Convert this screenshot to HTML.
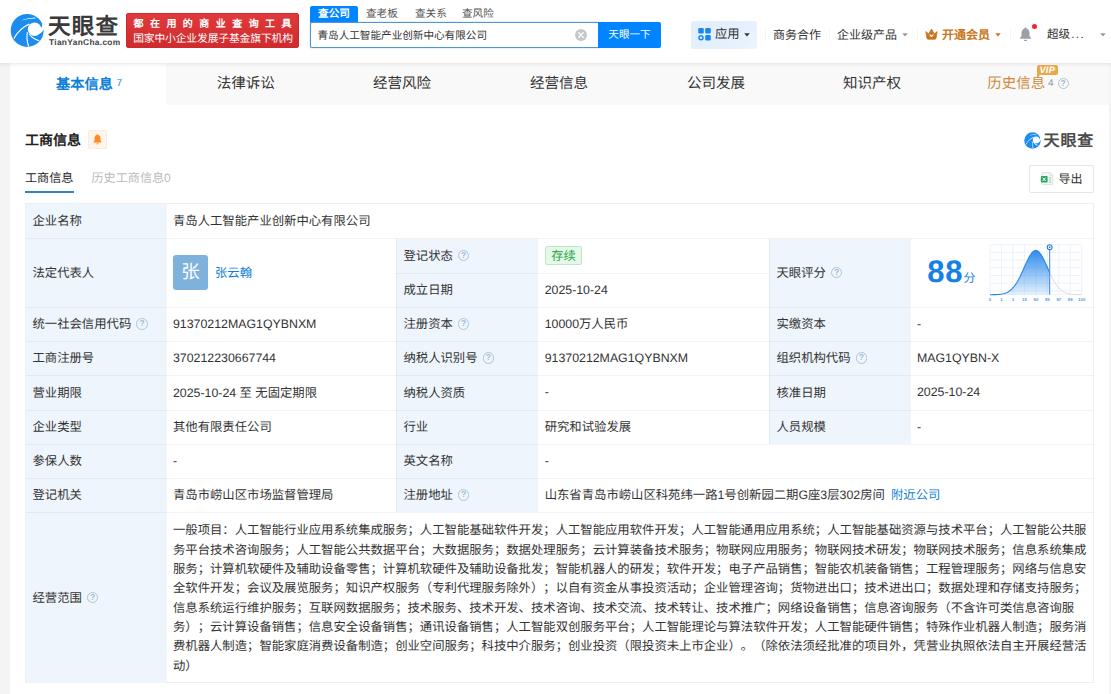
<!DOCTYPE html>
<html lang="zh-CN">
<head>
<meta charset="utf-8">
<title>天眼查</title>
<style>
*{box-sizing:border-box;margin:0;padding:0}
html,body{width:1111px;height:694px;overflow:hidden}
body{position:relative;background:#f4f4f4;font-family:"Liberation Sans",sans-serif;font-size:12px;color:#333;line-height:1;text-rendering:geometricPrecision}
.abs{position:absolute;white-space:nowrap}
/* header */
#hdr{position:absolute;left:0;top:0;width:1111px;height:63px;background:#fff}
#hsh{position:absolute;left:0;top:63px;width:1111px;height:4px;background:linear-gradient(rgba(0,0,20,.07),rgba(0,0,20,0));z-index:5}
#banner{position:absolute;left:126px;top:13px;width:173px;height:35px;background:linear-gradient(#e03a3c,#cf2a2d);border:1px solid #cc2c2e;border-radius:2px;color:#fff}
#banner .l1{position:absolute;left:-1px;top:6px;width:173px;text-align:center;font-size:10px;font-weight:bold;letter-spacing:6.450px;padding-left:6.500px}
#banner .l2{position:absolute;left:-.5px;top:19.500px;width:173px;text-align:center;font-size:10.800px;font-weight:500;letter-spacing:-.15px}
.stab{position:absolute;top:6.700px;height:16px;line-height:15px;font-size:10.6px;color:#555}
#stab1{top:6px;height:17px;line-height:16.400px;left:310px;width:48px;background:#0084ff;color:#fff;font-weight:bold;text-align:center;border-radius:2px 2px 0 0}
#sinput{position:absolute;left:310px;top:22px;width:289px;height:26px;border:1px solid #4f97d3;box-shadow:0 0 2px rgba(80,160,230,.5);border-right:0;background:#fff;border-radius:2px 0 0 2px}
#sinput span{position:absolute;left:6.500px;top:8px;font-size:10.6px;line-height:11px;color:#333}
#sbtn{position:absolute;left:598px;top:22px;width:63px;height:26px;background:#0084ff;color:#fff;font-size:10.6px;font-weight:500;text-align:center;line-height:26.500px;border-radius:0 2px 2px 0}
#app{position:absolute;left:691px;top:21px;width:66px;height:28px;background:linear-gradient(135deg,#e1eefc 0%,#e4f0fc 60%,#eef5fd 100%);border-radius:2px}
.nav{position:absolute;top:29px;font-size:12px;line-height:12px;color:#333}
.caret{position:absolute;width:6px;height:4px;background:#999;clip-path:polygon(4% 5%,96% 5%,50% 88%)}
.vsep{position:absolute;top:29px;width:1px;height:11px;background:#f5f5f5}
/* tabs */
#tabs{position:absolute;left:10px;top:63px;width:1099px;height:42px;background:#f9f9f9}
#tabs .on{position:absolute;left:0;top:0;width:156px;height:42px;background:#fff}
.tab{position:absolute;top:77.300px;font-size:14.5px;line-height:15px;color:#333;transform:translateX(-50%)}
/* content */
#main{position:absolute;left:10px;top:105px;width:1099px;height:589px;background:#fff}
/* table */
#tbl{position:absolute;left:25px;top:203px;width:1069px;height:480px;border:1px solid #eeeff0;background:#fff}
.lb{position:absolute;background:#eef5fc}
.hl{position:absolute;height:1px;background:rgba(20,40,60,.055)}
.vl{position:absolute;width:1px;background:rgba(20,40,60,.05)}
.t{position:absolute;white-space:nowrap;font-size:12.35px;line-height:14px;color:#333;text-spacing-trim:space-all}
.q{display:inline-block;width:11.500px;height:11.500px;border:1px solid #afc5d9;border-radius:50%;color:#a3bbd1;font-size:8.500px;line-height:9.500px;text-align:center;vertical-align:2px;margin-left:5px;font-weight:bold}
.blue{color:#0e7fdb}
</style>
</head>
<body>
<div id="hdr">
<svg class="abs" style="left:6px;top:10px" width="44" height="42" viewBox="0 0 727 694">
<circle cx="350" cy="338" r="272" fill="#1b8cf0"/>
<circle cx="472" cy="318" r="112" fill="#fff"/>
<path d="M583 293C600 270 603 250 598 228L660 228L660 322L622 322C612 350 590 375 560 388L472 318Z" fill="#fff"/>
<path d="M122 468Q215 295 380 222L395 240Q230 310 136 478Z" fill="#fff"/>
<path d="M365 606Q322 480 345 360L362 372Q342 480 385 602Z" fill="#fff"/>
<path d="M372 392Q420 480 545 515L552 500Q440 465 392 398Z" fill="#fff"/>
<path d="M265 165Q380 120 492 122L480 140Q380 135 275 170Z" fill="#fff"/>
</svg>
<div class="abs" style="left:48px;top:15.300px;font-size:22.5px;font-weight:bold;color:#3a3a3a;letter-spacing:1.2px;line-height:24px">天眼查</div>
<div class="abs" style="left:49px;top:38px;font-size:8.4px;font-weight:bold;color:#444;letter-spacing:.3px;line-height:8px">TianYanCha.com</div>
<div id="banner"><div class="l1">都在用的商业查询工具</div><div class="l2">国家中小企业发展子基金旗下机构</div></div>
<div class="stab" id="stab1">查公司</div>
<div class="stab" style="left:366px">查老板</div>
<div class="stab" style="left:415px">查关系</div>
<div class="stab" style="left:462px">查风险</div>
<div id="sinput"><span>青岛人工智能产业创新中心有限公司</span></div>
<svg class="abs" style="left:575px;top:28.500px" width="12" height="12" viewBox="0 0 12 12"><circle cx="6" cy="6" r="6" fill="#c4c7cc"/><path d="M3.800 3.800l4.400 4.400M8.200 3.800l-4.400 4.400" stroke="#fff" stroke-width="1.300" stroke-linecap="round"/></svg>
<div id="sbtn">天眼一下</div>
<div id="app"></div>
<svg class="abs" style="left:698px;top:28.400px" width="13.500" height="13" viewBox="0 0 13 13"><rect x="0" y="0" width="5.500" height="5.500" rx="1.200" fill="#1a85f0"/><rect x="7" y="0" width="5.500" height="5.500" rx="1.200" fill="#1a85f0"/><rect x="7" y="7" width="5.500" height="5.500" rx="1.200" fill="#1a85f0"/><circle cx="2.750" cy="9.750" r="2" fill="none" stroke="#1a85f0" stroke-width="1.500"/></svg>
<div class="nav" style="left:715px;top:28px;font-size:12.3px">应用</div>
<div class="caret" style="left:744px;top:33px;background:#333"></div>
<div class="vsep" style="left:765px"></div>
<div class="nav" style="left:773px">商务合作</div>
<div class="vsep" style="left:829px"></div>
<div class="nav" style="left:837px">企业级产品</div>
<div class="caret" style="left:902px;top:33px"></div>
<div class="vsep" style="left:917px"></div>
<svg class="abs" style="left:925px;top:27.500px" width="13" height="12" viewBox="0 0 13 12"><path d="M0.800 3.600L3.700 5.900L6.500 1L9.300 5.900L12.200 3.600L11 10.200Q10.900 11.200 9.900 11.200H3.100Q2.100 11.200 2 10.200Z" fill="#cb7420" stroke="#cb7420" stroke-width=".8" stroke-linejoin="round"/><path d="M4.900 6.800L6.500 8.500L8.100 6.800" fill="none" stroke="#fff" stroke-width="1.100" stroke-linecap="round" stroke-linejoin="round"/></svg>
<div class="nav" style="left:942px;color:#cb7420;font-weight:bold">开通会员</div>
<div class="caret" style="left:995px;top:33px;background:#cb7420"></div>
<div class="vsep" style="left:1010px"></div>
<svg class="abs" style="left:1019px;top:27px" width="13" height="15" viewBox="0 0 13 15"><path d="M6.500 0.500c.6 0 1 .4 1 1c2 .6 3 2.300 3 4.500v3l1.500 2v.8h-11v-.8l1.500-2v-3c0-2.200 1-3.900 3-4.500c0-.6 .4-1 1-1z" fill="#9aa0a6"/><rect x="5" y="12.800" width="3" height="1.200" rx=".6" fill="#9aa0a6"/></svg>
<div class="abs" style="left:1032px;top:24px;width:5px;height:5px;border-radius:50%;background:#f5222d"></div>
<div class="nav" style="left:1047px;top:29px;font-size:11.6px">超级<span style="letter-spacing:1.400px;margin-left:1px">...</span></div>
<div class="caret" style="left:1100px;top:33px"></div>
</div>
<div id="tabs"><div class="on"></div></div>
<div class="tab" style="left:84.500px;top:77.800px;color:#0e7fdb;font-weight:bold;font-size:14.2px">基本信息</div>
<div class="abs" style="left:116.500px;top:79px;font-size:10px;color:#0e7fdb">7</div>
<div class="tab" style="left:245.700px">法律诉讼</div>
<div class="tab" style="left:402px">经营风险</div>
<div class="tab" style="left:559px">经营信息</div>
<div class="tab" style="left:716px">公司发展</div>
<div class="tab" style="left:872px">知识产权</div>
<div class="tab" style="left:1016.300px;color:#d08a3c">历史信息</div>
<div class="abs" style="left:1048px;top:79px;font-size:10px;color:#8a97a5">4</div>
<div class="abs q" style="left:1052.500px;top:77.500px;width:11px;height:11px;line-height:9px">?</div>
<div class="abs" style="left:1036.500px;top:65px;width:21.500px;height:10px;background:#e9a94b;border-radius:2px 2px 2px 0;color:#fff;font-size:9.300px;font-weight:bold;font-style:italic;line-height:10px;text-align:center;letter-spacing:.2px">VIP</div>
<div class="abs" style="left:1036.500px;top:75px;width:0;height:0;border-top:3px solid #e9a94b;border-right:3.500px solid transparent"></div>
<div id="main"></div>
<div class="abs" style="left:25px;top:132.800px;font-size:14px;font-weight:bold;color:#222">工商信息</div>
<div class="abs" style="left:88px;top:130px;width:19px;height:19px;background:#fff5ea;border:1px solid #fdebd8;border-radius:2px"></div>
<svg class="abs" style="left:93px;top:134.200px" width="9" height="11" viewBox="0 0 9 11"><path d="M4.500 0.300c.5 0 .8 .3 .8 .8c1.500 .5 2.200 1.700 2.200 3.300v2.200l1 1.400v.6h-8v-.6l1-1.400v-2.200c0-1.600 .7-2.800 2.200-3.300c0-.5 .3-.8 .8-.8z" fill="#ff8a1f"/><rect x="3.400" y="9.300" width="2.200" height="1" rx=".5" fill="#ff8a1f"/></svg>
<div class="abs" style="left:25px;top:172px;font-size:12.1px;color:#222">工商信息</div>
<div class="abs" style="left:25px;top:191px;width:49px;height:2px;background:#2f86c4"></div>
<div class="abs" style="left:91.500px;top:172px;font-size:12.1px;color:#bbb">历史工商信息0</div>
<div class="abs" style="left:1029px;top:165px;width:65px;height:28px;border:1px solid #e6e6e6;border-radius:2px;background:#fff"></div>
<div class="abs" style="left:1058.500px;top:173px;font-size:12px;color:#333">导出</div>
<svg class="abs" style="left:1040px;top:172px" width="14" height="13" viewBox="0 0 14 13"><path d="M2.800 0.500h7.200l2.800 2.800v8.400c0 .4-.3 .8-.8 .8h-9.200c-.4 0-.8-.3-.8-.8v-10.400c0-.4 .3-.8 .8-.8z" fill="#f4f7f5" stroke="#d5dcd7" stroke-width=".8"/><path d="M10 0.500v2.800h2.800" fill="#e3e9e5" stroke="#d5dcd7" stroke-width=".6"/><rect x="9.200" y="5.200" width="2" height="1.300" fill="#9ed4b4"/><rect x="9.200" y="7.400" width="2" height="1.300" fill="#9ed4b4"/><rect x="9.200" y="9.600" width="2" height="1.300" fill="#9ed4b4"/><rect x="0.800" y="4" width="6.800" height="6.600" rx=".8" fill="#2fa565"/><path d="M2.700 5.600l3 3.400M5.700 5.600l-3 3.400" stroke="#fff" stroke-width="1"/></svg>
<svg class="abs" style="left:1023.800px;top:131.700px" width="17" height="17" viewBox="70 58 560 560"><circle cx="350" cy="338" r="272" fill="#1b8cf0"/>
<circle cx="472" cy="318" r="112" fill="#fff"/>
<path d="M583 293C600 270 603 250 598 228L660 228L660 322L622 322C612 350 590 375 560 388L472 318Z" fill="#fff"/>
<path d="M122 468Q215 295 380 222L395 240Q230 310 136 478Z" fill="#fff"/>
<path d="M365 606Q322 480 345 360L362 372Q342 480 385 602Z" fill="#fff"/>
<path d="M372 392Q420 480 545 515L552 500Q440 465 392 398Z" fill="#fff"/>
<path d="M265 165Q380 120 492 122L480 140Q380 135 275 170Z" fill="#fff"/></svg>
<div class="abs" style="left:1043.500px;top:132.500px;font-size:16px;font-weight:bold;color:#4d4d4d;line-height:18px;letter-spacing:.9px">天眼查</div>
<div id="tbl"></div>
<!--TBL-->
<div class="lb" style="left:26px;top:204px;width:140px;height:479px"></div>
<div class="lb" style="left:396px;top:239px;width:141px;height:273px"></div>
<div class="lb" style="left:769px;top:239px;width:141px;height:205px"></div>
<div class="hl" style="left:26px;top:238px;width:1068px"></div>
<div class="hl" style="left:26px;top:307px;width:1068px"></div>
<div class="hl" style="left:26px;top:341px;width:1068px"></div>
<div class="hl" style="left:26px;top:375px;width:1068px"></div>
<div class="hl" style="left:26px;top:410px;width:1068px"></div>
<div class="hl" style="left:26px;top:444px;width:1068px"></div>
<div class="hl" style="left:26px;top:478px;width:1068px"></div>
<div class="hl" style="left:26px;top:512px;width:1068px"></div>
<div class="hl" style="left:396px;top:273px;width:373px"></div>
<div class="vl" style="left:166px;top:204px;height:479px"></div>
<div class="vl" style="left:396px;top:238px;height:274px"></div>
<div class="vl" style="left:537px;top:238px;height:274px"></div>
<div class="vl" style="left:769px;top:238px;height:206px"></div>
<div class="vl" style="left:910px;top:238px;height:206px"></div>
<div class="t " style="left:32.5px;top:213.9px;">企业名称</div>
<div class="t " style="left:173px;top:213.9px;">青岛人工智能产业创新中心有限公司</div>
<div class="t " style="left:32.5px;top:265.9px;">法定代表人</div>
<div class="abs" style="left:173px;top:255px;width:35px;height:35px;border-radius:3px;background:#7eb2dd;color:#fff;font-size:18.500px;font-weight:500;line-height:34px;text-align:center">张</div>
<div class="t blue" style="left:215px;top:265.9px;">张云翰</div>
<div class="t " style="left:403.5px;top:248.9px;">登记状态<span class="q">?</span></div>
<div class="abs" style="left:545px;top:246px;width:37px;height:19px;border:1px solid #bfe9c6;border-radius:2px;background:#e6f8e9;color:#28a745;font-size:12.3px;line-height:18.400px;text-align:center">存续</div>
<div class="t " style="left:403.5px;top:283.4px;">成立日期</div>
<div class="t " style="left:544.7px;top:282.7px;">2025-10-24</div>
<div class="t " style="left:776.5px;top:265.9px;">天眼评分<span class="q">?</span></div>
<div class="t " style="left:32.5px;top:317.4px;">统一社会信用代码<span class="q">?</span></div>
<div class="t " style="left:173px;top:316.7px;">91370212MAG1QYBNXM</div>
<div class="t " style="left:403.5px;top:317.4px;">注册资本<span class="q">?</span></div>
<div class="t " style="left:544.7px;top:317.1px;">10000万人民币</div>
<div class="t " style="left:776.5px;top:317.4px;">实缴资本</div>
<div class="t " style="left:917px;top:316.7px;">-</div>
<div class="t " style="left:32.5px;top:351.4px;">工商注册号</div>
<div class="t " style="left:173px;top:350.7px;">370212230667744</div>
<div class="t " style="left:403.5px;top:351.4px;">纳税人识别号<span class="q">?</span></div>
<div class="t " style="left:544.7px;top:350.7px;">91370212MAG1QYBNXM</div>
<div class="t " style="left:776.5px;top:351.4px;">组织机构代码<span class="q">?</span></div>
<div class="t " style="left:917px;top:350.7px;">MAG1QYBN-X</div>
<div class="t " style="left:32.5px;top:385.9px;">营业期限</div>
<div class="t " style="left:173px;top:385.6px;">2025-10-24 至 无固定期限</div>
<div class="t " style="left:403.5px;top:385.9px;">纳税人资质</div>
<div class="t " style="left:544.7px;top:385.2px;">-</div>
<div class="t " style="left:776.5px;top:385.9px;">核准日期</div>
<div class="t " style="left:917px;top:385.2px;">2025-10-24</div>
<div class="t " style="left:32.5px;top:420.4px;">企业类型</div>
<div class="t " style="left:173px;top:420.4px;">其他有限责任公司</div>
<div class="t " style="left:403.5px;top:420.4px;">行业</div>
<div class="t " style="left:544.7px;top:420.4px;">研究和试验发展</div>
<div class="t " style="left:776.5px;top:420.4px;">人员规模</div>
<div class="t " style="left:917px;top:419.7px;">-</div>
<div class="t " style="left:32.5px;top:454.4px;">参保人数</div>
<div class="t " style="left:173px;top:453.7px;">-</div>
<div class="t " style="left:403.5px;top:454.4px;">英文名称</div>
<div class="t " style="left:544.7px;top:453.7px;">-</div>
<div class="t " style="left:32.5px;top:488.4px;">登记机关</div>
<div class="t " style="left:173px;top:488.4px;">青岛市崂山区市场监督管理局</div>
<div class="t " style="left:403.5px;top:488.4px;">注册地址<span class="q">?</span></div>
<div class="t " style="left:544.7px;top:488.1px;">山东省青岛市崂山区科苑纬一路1号创新园二期G座3层302房间</div>
<div class="t blue" style="left:891px;top:488.4px;">附近公司</div>
<div class="t " style="left:32.5px;top:590.9px;">经营范围<span class="q">?</span></div>
<div class="t sc" style="left:173px;top:523.4px;width:910.2px;text-align:justify;text-align-last:justify;">一般项目：人工智能行业应用系统集成服务；人工智能基础软件开发；人工智能应用软件开发；人工智能通用应用系统；人工智能基础资源与技术平台；人工智能公共服</div>
<div class="t sc" style="left:173px;top:542.7px;width:910.2px;text-align:justify;text-align-last:justify;">务平台技术咨询服务；人工智能公共数据平台；大数据服务；数据处理服务；云计算装备技术服务；物联网应用服务；物联网技术研发；物联网技术服务；信息系统集成</div>
<div class="t sc" style="left:173px;top:562.0px;width:910.2px;text-align:justify;text-align-last:justify;">服务；计算机软硬件及辅助设备零售；计算机软硬件及辅助设备批发；智能机器人的研发；软件开发；电子产品销售；智能农机装备销售；工程管理服务；网络与信息安</div>
<div class="t sc" style="left:173px;top:581.3px;width:910.2px;text-align:justify;text-align-last:justify;">全软件开发；会议及展览服务；知识产权服务（专利代理服务除外）；以自有资金从事投资活动；企业管理咨询；货物进出口；技术进出口；数据处理和存储支持服务；</div>
<div class="t sc" style="left:173px;top:600.6px;width:897.9px;text-align:justify;text-align-last:justify;">信息系统运行维护服务；互联网数据服务；技术服务、技术开发、技术咨询、技术交流、技术转让、技术推广；网络设备销售；信息咨询服务（不含许可类信息咨询服</div>
<div class="t sc" style="left:173px;top:619.9px;width:910.2px;text-align:justify;text-align-last:justify;">务）；云计算设备销售；信息安全设备销售；通讯设备销售；人工智能双创服务平台；人工智能理论与算法软件开发；人工智能硬件销售；特殊作业机器人制造；服务消</div>
<div class="t sc" style="left:173px;top:639.2px;width:910.2px;text-align:justify;text-align-last:justify;">费机器人制造；智能家庭消费设备制造；创业空间服务；科技中介服务；创业投资（限投资未上市企业）。（除依法须经批准的项目外，凭营业执照依法自主开展经营活</div>
<div class="t sc" style="left:173px;top:658.5px;">动）</div>
<!--/TBL-->
<!--CHART-->
<svg class="abs" style="left:985px;top:240px" width="105" height="66" viewBox="0 0 105 66">
<defs><linearGradient id="bg1" x1="0" y1="0" x2="0" y2="1"><stop offset="0" stop-color="#2f8dec"/><stop offset="1" stop-color="#2f8dec" stop-opacity=".12"/></linearGradient></defs>
<path d="M5.0 4.7V54.7M16.5 4.7V54.7M27.9 4.7V54.7M39.4 4.7V54.7M50.9 4.7V54.7M62.3 4.7V54.7M73.8 4.7V54.7M85.2 4.7V54.7M96.7 4.7V54.7M5.0 4.7H96.7M5.0 12.4H96.7M5.0 20.1H96.7M5.0 27.8H96.7M5.0 35.5H96.7M5.0 43.2H96.7M5.0 50.9H96.7M5.0 54.7H96.7" stroke="#ecf2fb" stroke-width="1" fill="none"/>
<path d="M64.7 32.6 L66.2 35.8 L67.7 38.9 L69.2 41.6 L70.7 44.0 L72.2 46.2 L73.7 48.0 L75.2 49.5 L76.7 50.7 L78.2 51.7 L79.7 52.5 L81.2 53.1 L82.7 53.6 L84.2 53.9 L85.7 54.1 L87.2 54.3 L88.7 54.4 L90.2 54.5 L91.7 54.6 L93.2 54.6 L94.7 54.7 L96.2 54.7" stroke="#d9dde3" stroke-width="1" fill="none"/>
<path d="M5.0 54.7 L5.0 54.7 L6.5 54.7 L8.0 54.6 L9.5 54.6 L11.0 54.6 L12.5 54.5 L14.0 54.4 L15.5 54.2 L17.0 54.0 L18.5 53.7 L20.0 53.2 L21.5 52.7 L23.0 51.9 L24.5 51.0 L26.0 49.8 L27.5 48.4 L29.0 46.7 L30.5 44.6 L32.0 42.3 L33.5 39.6 L35.0 36.7 L36.5 33.5 L38.0 30.2 L39.5 26.8 L41.0 23.4 L42.5 20.2 L44.0 17.3 L45.5 14.7 L47.0 12.7 L48.5 11.3 L50.0 10.6 L51.5 10.6 L53.0 11.3 L54.5 12.6 L56.0 14.6 L57.5 17.1 L59.0 20.0 L60.5 23.2 L62.0 26.5 L63.5 29.9 L64.7 32.6 L64.7 54.7Z" fill="url(#bg1)"/>
<path d="M5.0 54.7 L6.5 54.7 L8.0 54.6 L9.5 54.6 L11.0 54.6 L12.5 54.5 L14.0 54.4 L15.5 54.2 L17.0 54.0 L18.5 53.7 L20.0 53.2 L21.5 52.7 L23.0 51.9 L24.5 51.0 L26.0 49.8 L27.5 48.4 L29.0 46.7 L30.5 44.6 L32.0 42.3 L33.5 39.6 L35.0 36.7 L36.5 33.5 L38.0 30.2 L39.5 26.8 L41.0 23.4 L42.5 20.2 L44.0 17.3 L45.5 14.7 L47.0 12.7 L48.5 11.3 L50.0 10.6 L51.5 10.6 L53.0 11.3 L54.5 12.6 L56.0 14.6 L57.5 17.1 L59.0 20.0 L60.5 23.2 L62.0 26.5 L63.5 29.9 L64.7 32.6" stroke="#2a86e4" stroke-width="1.1" fill="none"/>
<path d="M64.7 9.7V54.7" stroke="#3f86cf" stroke-width="1"/>
<circle cx="64.7" cy="7.2" r="2.400" fill="#fff" stroke="#2a7fd6" stroke-width="1.100"/>
<circle cx="64.7" cy="7.2" r="0.900" fill="#2a7fd6"/>
<text x="5.0" y="60.6" font-size="4.300" font-weight="bold" fill="#5a9fe6" text-anchor="middle" font-family="Liberation Sans, sans-serif">0</text>
<text x="16.5" y="60.6" font-size="4.300" font-weight="bold" fill="#5a9fe6" text-anchor="middle" font-family="Liberation Sans, sans-serif">1</text>
<text x="27.9" y="60.6" font-size="4.300" font-weight="bold" fill="#5a9fe6" text-anchor="middle" font-family="Liberation Sans, sans-serif">3</text>
<text x="39.4" y="60.6" font-size="4.300" font-weight="bold" fill="#5a9fe6" text-anchor="middle" font-family="Liberation Sans, sans-serif">15</text>
<text x="50.9" y="60.6" font-size="4.300" font-weight="bold" fill="#5a9fe6" text-anchor="middle" font-family="Liberation Sans, sans-serif">50</text>
<text x="62.3" y="60.6" font-size="4.300" font-weight="bold" fill="#5a9fe6" text-anchor="middle" font-family="Liberation Sans, sans-serif">85</text>
<text x="73.8" y="60.6" font-size="4.300" font-weight="bold" fill="#5a9fe6" text-anchor="middle" font-family="Liberation Sans, sans-serif">97</text>
<text x="85.2" y="60.6" font-size="4.300" font-weight="bold" fill="#5a9fe6" text-anchor="middle" font-family="Liberation Sans, sans-serif">99</text>
<text x="96.7" y="60.6" font-size="4.300" font-weight="bold" fill="#5a9fe6" text-anchor="middle" font-family="Liberation Sans, sans-serif">100</text>
</svg>
<div class="abs" style="left:927.300px;top:257px;font-size:31px;font-weight:bold;color:#1680e6;line-height:30px;letter-spacing:.6px">88</div>
<div class="abs" style="left:963.500px;top:272px;font-size:12px;color:#1680e6;line-height:13px">分</div>
<!--/CHART-->
<div id="hsh"></div>
</body>
</html>
